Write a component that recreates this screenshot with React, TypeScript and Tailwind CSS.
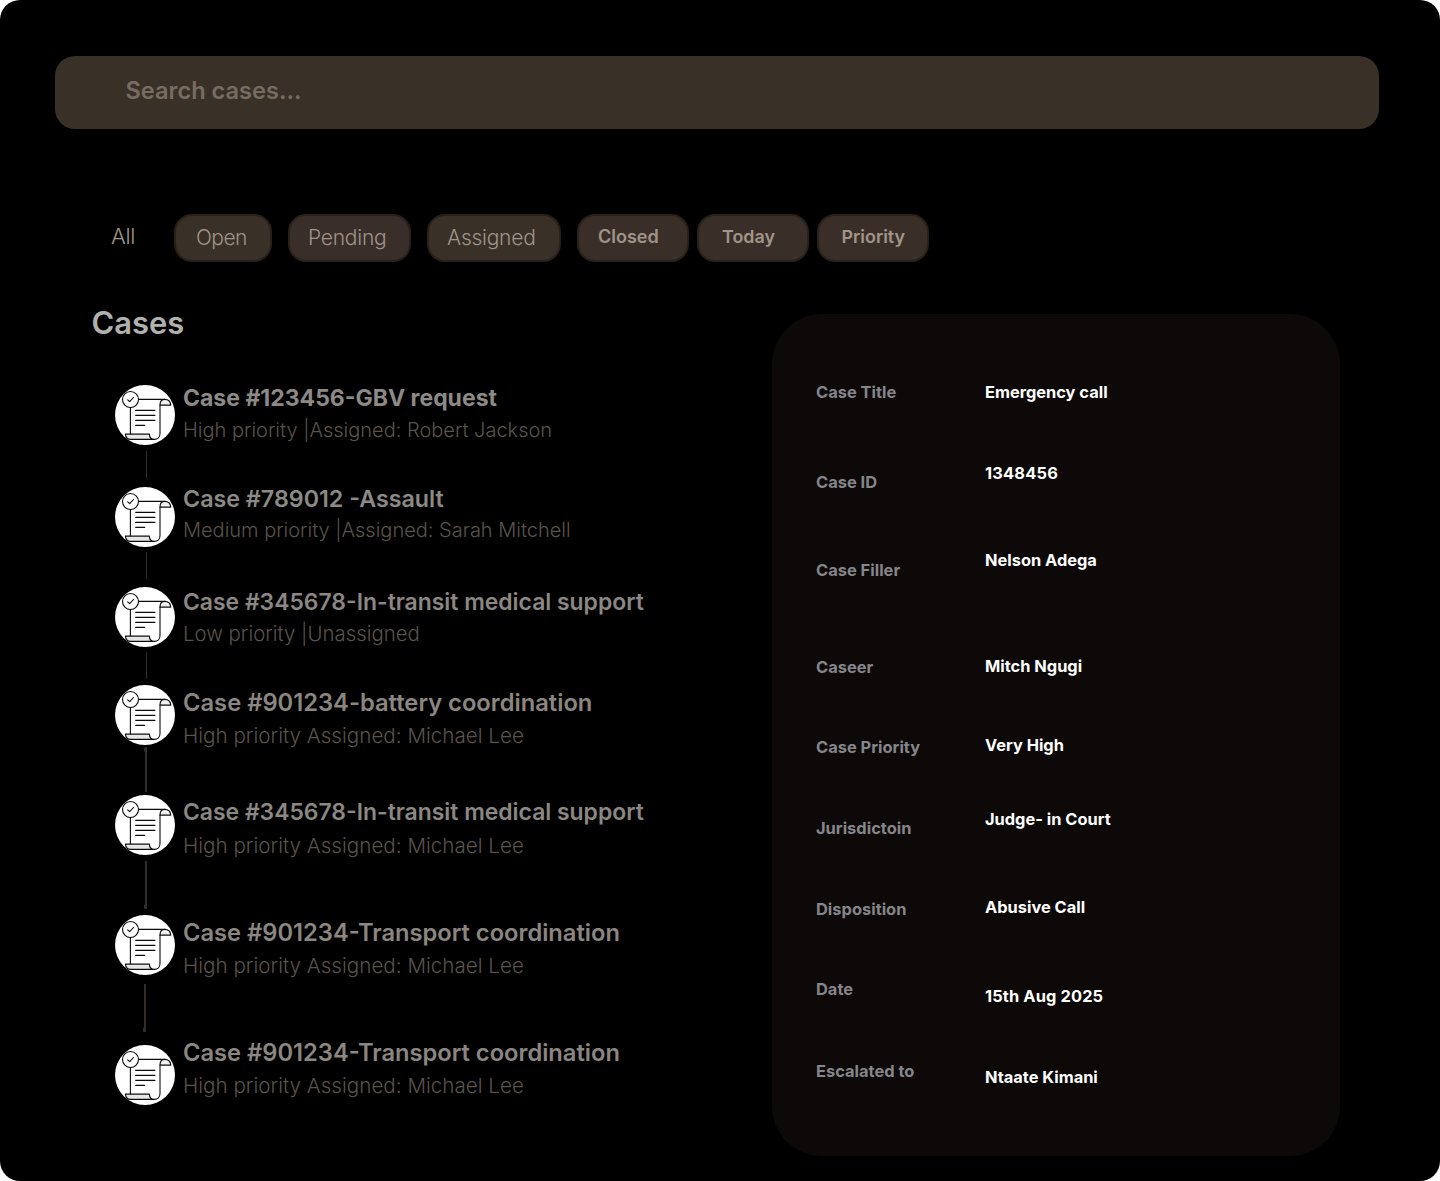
import React from "react";

type Filter = { label: string; box: string; text: string };

const filters: Filter[] = [
  { label: "Open", box: "w-[98px] bg-[#393027] mr-4", text: "pl-[20px] text-[21px] tracking-[-0.6px] font-light leading-[44px]" },
  { label: "Pending", box: "w-[123px] bg-[#392e2a] mr-4", text: "pl-[18px] text-[21px] tracking-[-0.25px] font-light leading-[44px]" },
  { label: "Assigned", box: "w-[134px] bg-[#393028] mr-4", text: "pl-[18px] text-[21px] tracking-[-0.25px] font-light leading-[44px]" },
  { label: "Closed", box: "w-[112px] bg-[#392f28] mr-2", text: "mt-[-3px] pl-[19px] text-[18px] font-semibold leading-[41px]" },
  { label: "Today", box: "w-[112px] bg-[#392f28] mr-2", text: "mt-[-3px] pl-[23px] text-[17.9px] font-semibold leading-[41px]" },
  { label: "Priority", box: "w-[112px] bg-[#392f28]", text: "mt-[-3px] pl-[22.5px] text-[17.9px] font-semibold leading-[41px]" },
];

type CaseRow = {
  title: string;
  meta: string;
  row: string;
  titleClass: string;
  metaClass: string;
  link?: string;
  knot?: "top" | "bottom";
};

const cases: CaseRow[] = [
  {
    title: "Case #123456-GBV request",
    meta: "High priority |Assigned: Robert Jackson",
    row: "h-[102px]",
    titleClass: "mt-[-2px] text-[23px] font-bold text-[#8d8986]",
    metaClass: "mt-[2px] text-[20.03px]",
    link: "mt-[6px] ml-[31px] h-[27px] w-px",
  },
  {
    title: "Case #789012 -Assault",
    meta: "Medium priority |Assigned: Sarah Mitchell",
    row: "h-[100px]",
    titleClass: "mt-[-3px] text-[23.25px] font-semibold text-[#8b8a85]",
    metaClass: "mt-[1px] text-[20px]",
    link: "mt-[5px] ml-[31px] h-[27px] w-px",
  },
  {
    title: "Case #345678-In-transit medical support",
    meta: "Low priority |Unassigned",
    row: "h-[98px]",
    titleClass: "mt-0 text-[22.9px] font-semibold text-[#8b8783]",
    metaClass: "mt-[2px] text-[20.4px]",
    link: "mt-[5px] ml-[31px] h-[27px] w-px",
  },
  {
    title: "Case #901234-battery coordination",
    meta: "High priority Assigned: Michael Lee",
    row: "h-[110px]",
    titleClass: "mt-[3px] text-[23.72px] font-semibold text-[#8b8680]",
    metaClass: "mt-[3px] text-[20.64px]",
    link: "mt-[2px] ml-[30px] h-[45px] w-[1.5px]",
    knot: "top",
  },
  {
    title: "Case #345678-In-transit medical support",
    meta: "High priority Assigned: Michael Lee",
    row: "h-[120px]",
    titleClass: "mt-[2px] text-[22.9px] font-semibold text-[#8b8783]",
    metaClass: "mt-[4px] text-[20.64px]",
    link: "mt-[6px] ml-[30px] h-[48px] w-[1.5px]",
    knot: "bottom",
  },
  {
    title: "Case #901234-Transport coordination",
    meta: "High priority Assigned: Michael Lee",
    row: "h-[130px]",
    titleClass: "mt-[3px] text-[23.7px] font-semibold text-[#8b8680]",
    metaClass: "mt-[3px] text-[20.64px]",
    link: "mt-[9px] ml-[29px] h-[48px] w-[1.5px]",
    knot: "bottom",
  },
  {
    title: "Case #901234-Transport coordination",
    meta: "High priority Assigned: Michael Lee",
    row: "h-[60px]",
    titleClass: "mt-[-7px] text-[23.7px] font-semibold text-[#8b8680]",
    metaClass: "mt-[3px] text-[20.64px]",
  },
];

const details = [
  { label: "Case Title", value: "Emergency call", row: "h-[81px]", l: "", v: "" },
  { label: "Case ID", value: "1348456", row: "h-[87px]", l: "mt-[9px]", v: "tracking-[0.2px]" },
  { label: "Case Filler", value: "Nelson Adega", row: "h-[106px]", l: "mt-[10px]", v: "" },
  { label: "Caseer", value: "Mitch Ngugi", row: "h-[79px]", l: "mt-px", v: "" },
  { label: "Case Priority", value: "Very High", row: "h-[74px]", l: "mt-[2px]", v: "" },
  { label: "Jurisdictoin", value: "Judge- in Court", row: "h-[88px]", l: "mt-[9px]", v: "" },
  { label: "Disposition", value: "Abusive Call", row: "h-[82px]", l: "mt-[2px]", v: "" },
  { label: "Date", value: "15th Aug 2025", row: "h-[82px]", l: "", v: "mt-[7px] tracking-[0.13px]" },
  { label: "Escalated to", value: "Ntaate Kimani", row: "h-[24px]", l: "", v: "mt-[6px]" },
];

function ScrollIcon() {
  return (
    <svg viewBox="0 0 60 60" className="block size-[60px]" fill="none" stroke="#0b0b0b" strokeWidth="1.1" strokeLinecap="round" strokeLinejoin="round">
      <circle cx="30" cy="30" r="30" fill="#fff" stroke="none" />
      <path d="M15.4 22.3V49M23.6 14.4H50" />
      <path d="M45 20.1C45 16.6 46.6 14.4 49.8 14.4C53.4 14.4 55.5 17 55.8 20.1Z" fill="#f1f1f1" />
      <path d="M11 50H34.2C34.5 52 35.3 53.5 36.6 54.1H15.5C13 54 11.5 52.5 11 50Z" fill="#e6e6e6" stroke="none" />
      <path d="M45 20V48.4C45 52 42.6 54.4 39.3 54.4C36.4 54.4 34.4 52.6 34.4 49.1H10.4C10.7 52.3 12.6 54.4 15.5 54.4H39.3" />
      <path d="M20.7 25.4H39.9M20.7 30.4H39.9M20.7 35.4H39.9M20.7 40.4H29.7" />
      <circle cx="15.5" cy="14.5" r="8" fill="#fff" />
      <path d="M12.7 14.9L14.7 16.7L18.5 12.5" />
    </svg>
  );
}

export default function App() {
  return (
    <div className="bg-white">
      <main className="h-[1181px] w-[1440px] overflow-hidden rounded-[20px] bg-black font-['Inter',sans-serif]">
        <div className="mt-[56px] ml-[55px] h-[73.3px] w-[1324px] rounded-[20px] bg-[#393027] pl-[70.5px] text-[23.6px] leading-[70px] font-semibold text-[#786c60]">
          Search cases...
        </div>

        <nav className="mt-[84.7px] flex h-12 items-start text-[#a09588]">
          <span className="ml-[111px] w-[63px] text-[22px] leading-[45px] font-light tracking-[-0.4px]">All</span>
          {filters.map((f) => (
            <button key={f.label} className={`h-12 shrink-0 rounded-[18px] border-2 border-[#292119] text-left ${f.box}`}>
              <span className={`block ${f.text}`}>{f.label}</span>
            </button>
          ))}
        </nav>

        <div className="flex items-start">
          <section className="w-[772px] pt-[40px]">
            <h1 className="ml-[91.5px] text-[30.9px] leading-[41px] font-semibold text-[#b0b0ac]">Cases</h1>
            <ul className="mt-[42px] ml-[115px]">
              {cases.map((c, i) => (
                <li key={i} className={`flex ${c.row}`}>
                  <div className="w-[68px] shrink-0">
                    <ScrollIcon />
                    {c.link && (
                      <div className={`relative bg-[#332d2a] ${c.link}`}>
                        {c.knot && (
                          <span
                            className={`absolute left-[-1px] h-[5px] w-[3px] rounded-sm bg-[#332d2a] ${c.knot === "top" ? "top-0" : "bottom-0"}`}
                          />
                        )}
                      </div>
                    )}
                  </div>
                  <div className="whitespace-nowrap">
                    <h2 className={`leading-[30px] ${c.titleClass}`}>{c.title}</h2>
                    <p className={`leading-[30px] font-light text-[#5b534b] ${c.metaClass}`}>{c.meta}</p>
                  </div>
                </li>
              ))}
            </ul>
          </section>

          <aside className="mt-[52px] h-[842px] w-[568px] rounded-[50px] bg-[#0c0908] pt-[66px] pl-[44px]">
            <dl>
              {details.map((d) => (
                <div key={d.label} className={`flex items-start text-[16.4px] leading-[24px] font-bold ${d.row}`}>
                  <dt className={`w-[169px] text-[16.45px] text-[#86858a] ${d.l}`}>{d.label}</dt>
                  <dd className={`text-white ${d.v}`}>{d.value}</dd>
                </div>
              ))}
            </dl>
          </aside>
        </div>
      </main>
    </div>
  );
}
